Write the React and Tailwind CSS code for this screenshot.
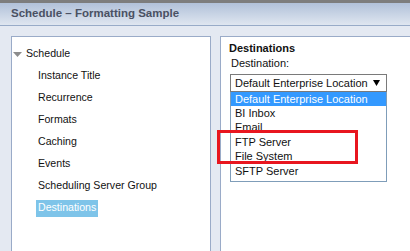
import React from 'react'

const items = [
  'Instance Title',
  'Recurrence',
  'Formats',
  'Caching',
  'Events',
  'Scheduling Server Group',
]

const options = [
  'Default Enterprise Location',
  'BI Inbox',
  'Email',
  'FTP Server',
  'File System',
  'SFTP Server',
]

const App = () => {
  return (
    <div className="relative w-[410px] h-[251px] overflow-hidden bg-[#e4e9f2] font-['Liberation_Sans',sans-serif] text-[11px] text-[#111]">
      <div className="h-[3px] bg-[#7d7d7d]"></div>
      <div className="h-[23px] flex items-center pl-[11px] bg-gradient-to-b from-[#b1c1d9] to-[#dfe6f0] border-b border-[#98abc8]">
        <span className="font-bold text-[11.5px] text-[#4a5163]">Schedule – Formatting Sample</span>
      </div>

      <div className="flex gap-[9px] pl-[11px] pt-[10px] h-[225px]">
        {/* tree */}
        <div className="w-[200px] h-full bg-white border border-b-0 border-[#9aabc8] pt-[6px] text-[10.6px]">
          <div className="h-[22px] flex items-center">
            <svg width="9" height="5" viewBox="0 0 9 5" className="ml-[1px] mr-[4px]">
              <polygon points="0,0 9,0 4.5,5" fill="#8c8c8c" />
            </svg>
            <span>Schedule</span>
          </div>
          {items.map((item) => (
            <div className="h-[22px] flex items-center pl-[26px]" key={item}>
              {item}
            </div>
          ))}
          <div className="h-[22px] flex items-center pl-[24px]">
            <span className="bg-[#7ec4e9] text-white px-[2px] h-[17px] flex items-center">Destinations</span>
          </div>
        </div>

        {/* destinations panel */}
        <div className="flex-1 h-full bg-white border-l border-t border-[#9aabc8] pl-[8px] pt-[4px]">
          <div className="font-bold h-[14px] flex items-center">Destinations</div>
          <div className="h-[16px] flex items-center pl-[2px]">Destination:</div>
          <div className="relative w-[157px] mt-[3px] ml-[1px]">
            <div className="h-[18px] border border-[#7a7a7a] flex items-center justify-between pl-[4px] pr-[6px]">
              <span>Default Enterprise Location</span>
              <svg width="7" height="6" viewBox="0 0 7 6">
                <polygon points="0,0 7,0 3.5,6" fill="#000" />
              </svg>
            </div>
            <div className="absolute top-full left-0 w-[157px] bg-white border border-t-0 border-[#7f9db9] pb-[3px]">
              {options.map((opt, i) => (
                <div
                  key={opt}
                  className={i === 0 ? 'h-[14px] flex items-center pl-[4px] bg-[#3399ff] text-white' : 'h-[14.4px] flex items-center pl-[4px]'}
                >
                  {opt}
                </div>
              ))}
            </div>
          </div>
        </div>
      </div>

      <div className="absolute left-[217px] top-[130px] w-[141px] h-[34px] border-[3px] border-[#e8161f]"></div>
    </div>
  )
}

export default App
